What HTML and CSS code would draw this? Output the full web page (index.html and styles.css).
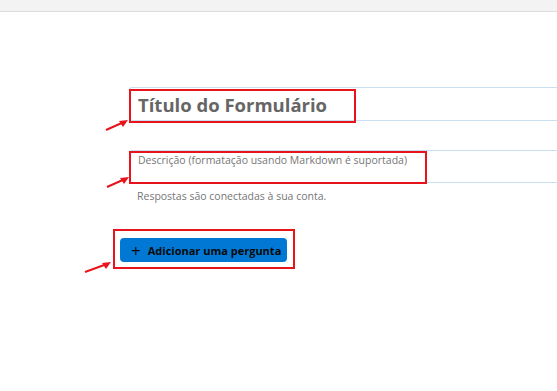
FILE: index.html
```html
<!DOCTYPE html>
<html lang="pt">
<head>
<meta charset="utf-8">
<title>Formulário</title>
<link rel="stylesheet" href="styles.css">
</head>
<body>
<header class="topbar"></header>
<main class="form">
  <div class="field title-field">Título do Formulário</div>
  <div class="field desc-field">Descrição (formatação usando Markdown é suportada)</div>
  <p class="note">Respostas são conectadas à sua conta.</p>
  <button class="add" type="button"><span class="plus">+</span>Adicionar uma pergunta</button>
</main>

<div class="mark mark-title"></div>
<div class="mark mark-desc"></div>
<div class="mark mark-btn"></div>

<svg class="arrow arrow-title" width="24" height="12" viewBox="0 0 24 12"><line x1="1" y1="11" x2="19" y2="3" stroke="#e8141b" stroke-width="2"/><polygon points="23,1 14,2 18,8" fill="#e8141b"/></svg>
<svg class="arrow arrow-desc" width="24" height="12" viewBox="0 0 24 12"><line x1="1" y1="11" x2="19" y2="3" stroke="#e8141b" stroke-width="2"/><polygon points="23,1 14,2 18,8" fill="#e8141b"/></svg>
<svg class="arrow arrow-btn" width="28" height="12" viewBox="0 0 28 12"><line x1="1" y1="11" x2="23" y2="3" stroke="#e8141b" stroke-width="2"/><polygon points="27,1 18,2 22,8" fill="#e8141b"/></svg>
</body>
</html>
```

FILE: styles.css
```css
html, body {
  margin: 0;
  padding: 0;
  background: #ffffff;
  overflow: hidden;
  width: 557px;
  height: 391px;
  font-family: "Open Sans", "Noto Sans", sans-serif;
}

.topbar {
  height: 11px;
  background: #f3f3f3;
  border-bottom: 1px solid #dcdcdc;
}

.form {
  padding-left: 129px;
  display: flex;
  flex-direction: column;
  align-items: flex-start;
}

.field {
  align-self: stretch;
  box-sizing: border-box;
  border: 1px solid #c9dff0;
  border-right: none;
  border-radius: 3px 0 0 3px;
  padding-left: 8px;
}

.title-field {
  margin-top: 75px;
  height: 34px;
  line-height: 34px;
  font-size: 18.5px;
  font-weight: 700;
  color: #666666;
}

.desc-field {
  margin-top: 29px;
  height: 33px;
  padding-top: 2px;
  font-size: 10.5px;
  line-height: 14px;
  color: #767676;
}

.note {
  margin: 6px 0 0 8px;
  font-size: 10.5px;
  line-height: 14px;
  color: #767676;
}

.add {
  margin: 35px 0 0 -9px;
  height: 24px;
  width: 167px;
  border: none;
  border-radius: 4px;
  background: #0078d4;
  color: #0a0a0a;
  font-family: "Open Sans", "Noto Sans", sans-serif;
  font-size: 11px;
  font-weight: 700;
  display: flex;
  align-items: center;
  padding: 0 0 0 11px;
}

.plus {
  font-size: 17px;
  font-weight: 400;
  margin-right: 7px;
  line-height: 1;
}

.mark {
  position: absolute;
  border: 2px solid #e8141b;
  box-sizing: border-box;
}

.mark-title { left: 129px; top: 89px; width: 227px; height: 34px; }
.mark-desc  { left: 129px; top: 151px; width: 298px; height: 33px; }
.mark-btn   { left: 113px; top: 229px; width: 182px; height: 40px; }

.arrow { position: absolute; }
.arrow-title { left: 105px; top: 119px; }
.arrow-desc  { left: 106px; top: 176px; }
.arrow-btn   { left: 84px; top: 261px; }
```
